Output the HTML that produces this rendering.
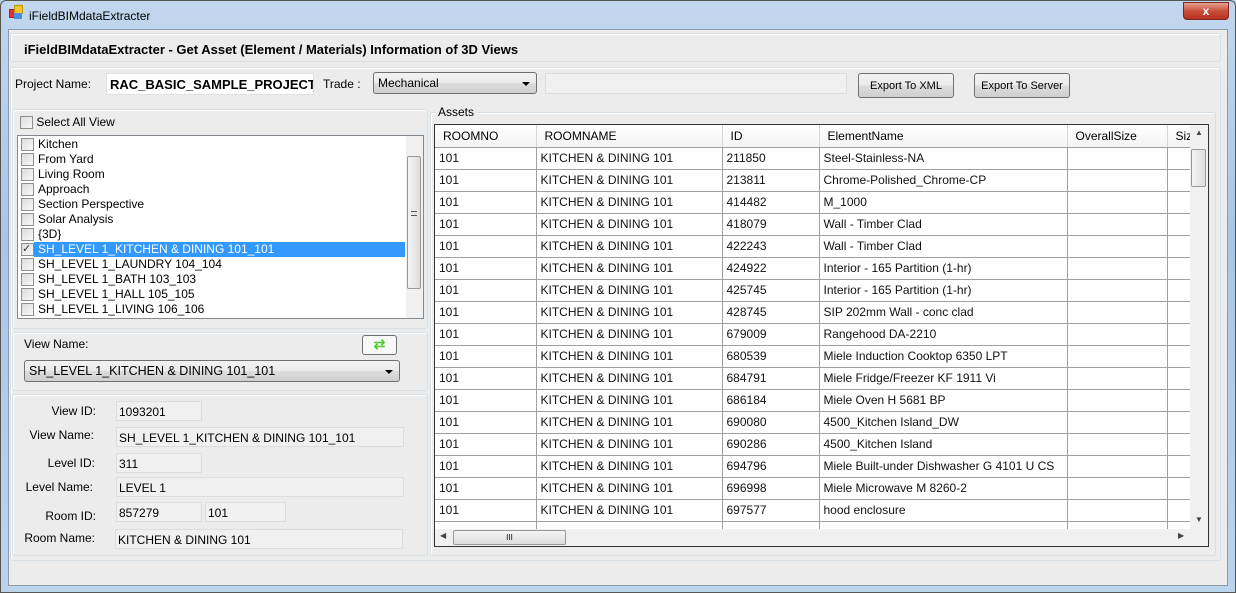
<!DOCTYPE html>
<html><head><meta charset="utf-8"><style>
*{box-sizing:border-box;margin:0;padding:0}
body{width:1236px;height:593px;position:relative;overflow:hidden;background:#b9d1ea;font-family:"Liberation Sans",sans-serif;font-size:12px;color:#000}
.a{position:absolute}
.frame{left:0;top:0;width:1236px;height:593px;background:linear-gradient(#c2d7ee,#a9c6e6 40%,#bcd3ec);border:1px solid #555;border-radius:6px 6px 0 0}
.client{left:8px;top:29px;width:1220px;height:557px;background:#ececec;border:1px solid #8a9bb0}
.grp{border:1px solid #d5dfe5;border-radius:3px;box-shadow:inset 1px 1px 0 #fff}
.tb{background:#f0f0f0;border:1px solid #dcdcdc;padding:3px 2px;font-size:12px;white-space:nowrap;overflow:hidden}
.btn{border:1px solid #707070;border-radius:3px;background:linear-gradient(#f2f2f2,#ebebeb 50%,#dddddd 51%,#cfcfcf);text-align:center;font-size:11px;line-height:24px}
.combo{border:1px solid #707070;border-radius:3px;background:linear-gradient(#f2f2f2,#ebebeb 50%,#dddddd 51%,#cfcfcf);padding:3px 4px;font-size:12px}
.arr{position:absolute;right:6px;top:9px;border-left:4px solid transparent;border-right:4px solid transparent;border-top:4px solid #000}
.cb{display:inline-block;width:13px;height:13px;border:1px solid #8e8f8f;background:linear-gradient(135deg,#dcdcdc,#f8f8f8);vertical-align:middle}
.li{height:15px;line-height:15px;position:relative;padding-left:20px;white-space:nowrap}
.li .cb{position:absolute;left:3px;top:1px}
.lbl{text-align:right;width:80px}
table{border-collapse:collapse;font-size:12px}
td{border-right:1px solid #a0a0a0;border-bottom:1px solid #a0a0a0;height:22px;padding-left:4px;white-space:nowrap;overflow:hidden;color:#111}
th{font-weight:normal;text-align:left;height:22px;padding-left:8px;border-right:1px solid #d5d5d5;border-bottom:1px solid #a0a0a0;background:linear-gradient(#fff,#f3f3f3)}
</style></head><body>
<div class="a frame"></div>
<div class="a" style="left:9px;top:9px;width:9px;height:9px;background:#d33;border:1px solid #a22"></div>
<div class="a" style="left:14px;top:5px;width:9px;height:9px;background:#f4c430;border:1px solid #b90"></div>
<div class="a" style="left:14px;top:13px;width:8px;height:6px;background:#4a8ee0"></div>
<div class="a" style="left:29px;top:9px;font-size:12px">iFieldBIMdataExtracter</div>
<div class="a" style="left:1183px;top:2px;width:46px;height:18px;border:1px solid #7a2a20;border-radius:0 0 4px 4px;background:linear-gradient(#e8a090,#c8503a 50%,#b83020);color:#fff;text-align:center;font-weight:bold;font-size:12px;line-height:16px">x</div>
<div class="a client"></div>
<div class="a grp" style="left:10px;top:33px;width:1211px;height:29px"></div>
<div class="a" style="left:24px;top:42px;font-weight:bold;font-size:13px">iFieldBIMdataExtracter - Get Asset (Element / Materials) Information of 3D Views</div>
<div class="a grp" style="left:10px;top:67px;width:1211px;height:494px"></div>
<div class="a" style="left:15px;top:77px">Project Name:</div>
<div class="a" style="left:106px;top:73px;width:208px;height:22px;background:#fff;border:1px solid #e0e0e0;font-weight:bold;font-size:13px;padding:3px 3px;overflow:hidden;white-space:nowrap">RAC_BASIC_SAMPLE_PROJECT</div>
<div class="a" style="left:323px;top:77px">Trade :</div>
<div class="a combo" style="left:373px;top:72px;width:164px;height:22px">Mechanical<span class="arr"></span></div>
<div class="a tb" style="left:545px;top:73px;width:302px;height:21px"></div>
<div class="a btn" style="left:858px;top:73px;width:96px;height:25px">Export To XML</div>
<div class="a btn" style="left:974px;top:73px;width:96px;height:25px">Export To Server</div>

<div class="a grp" style="left:12px;top:109px;width:416px;height:220px"></div>
<div class="a" style="left:20px;top:115px"><span class="cb"></span> Select All View</div>
<div class="a" style="left:17px;top:135px;width:407px;height:184px;background:#fff;border:1px solid #828790;padding-top:1px">
<div class="li"><span class="cb"></span>Kitchen</div>
<div class="li"><span class="cb"></span>From Yard</div>
<div class="li"><span class="cb"></span>Living Room</div>
<div class="li"><span class="cb"></span>Approach</div>
<div class="li"><span class="cb"></span>Section Perspective</div>
<div class="li"><span class="cb"></span>Solar Analysis</div>
<div class="li"><span class="cb"></span>{3D}</div>
<div class="li"><span class="cb" style="font-size:11px;line-height:11px;color:#334">✓</span><span style="position:absolute;left:16px;top:0;width:371px;height:15px;background:#3399ff;color:#fff;padding-left:4px">SH_LEVEL 1_KITCHEN &amp; DINING 101_101</span></div>
<div class="li"><span class="cb"></span>SH_LEVEL 1_LAUNDRY 104_104</div>
<div class="li"><span class="cb"></span>SH_LEVEL 1_BATH 103_103</div>
<div class="li"><span class="cb"></span>SH_LEVEL 1_HALL 105_105</div>
<div class="li"><span class="cb"></span>SH_LEVEL 1_LIVING 106_106</div>
<div class="a" style="right:0;top:0;width:17px;height:182px;background:#f0f0f0"><div style="position:absolute;left:1px;top:20px;width:14px;height:133px;border:1px solid #999;border-radius:2px;background:linear-gradient(90deg,#f4f4f4,#ddd)"></div><div style="position:absolute;left:5px;top:75px;width:6px;height:5px;border-top:1px solid #555;border-bottom:1px solid #555"></div></div>
</div>

<div class="a grp" style="left:12px;top:332px;width:416px;height:59px"></div>
<div class="a" style="left:24px;top:337px">View Name:</div>
<div class="a btn" style="left:362px;top:335px;width:35px;height:20px;background:#f8f8f8;line-height:16px;color:#5c3;font-weight:bold;font-size:14px">⇄</div>
<div class="a combo" style="left:24px;top:360px;width:376px;height:22px;font-size:12.5px">SH_LEVEL 1_KITCHEN &amp; DINING 101_101<span class="arr"></span></div>

<div class="a grp" style="left:12px;top:394px;width:416px;height:162px"></div>
<div class="a lbl" style="left:16px;top:404px">View ID:</div>
<div class="a tb" style="left:116px;top:401px;width:86px;height:20px">1093201</div>
<div class="a lbl" style="left:14px;top:428px">View Name:</div>
<div class="a tb" style="left:116px;top:427px;width:288px;height:20px">SH_LEVEL 1_KITCHEN &amp; DINING 101_101</div>
<div class="a lbl" style="left:15px;top:456px">Level ID:</div>
<div class="a tb" style="left:116px;top:453px;width:86px;height:20px">311</div>
<div class="a lbl" style="left:13px;top:480px">Level Name:</div>
<div class="a tb" style="left:116px;top:477px;width:288px;height:20px">LEVEL 1</div>
<div class="a lbl" style="left:16px;top:509px">Room ID:</div>
<div class="a tb" style="left:116px;top:502px;width:86px;height:20px">857279</div>
<div class="a tb" style="left:205px;top:502px;width:81px;height:20px">101</div>
<div class="a lbl" style="left:15px;top:531px">Room Name:</div>
<div class="a tb" style="left:115px;top:529px;width:288px;height:20px">KITCHEN &amp; DINING 101</div>

<div class="a grp" style="left:430px;top:112px;width:786px;height:444px"></div>
<div class="a" style="left:436px;top:105px;background:#ececec;padding:0 2px">Assets</div>
<div class="a" style="left:434px;top:124px;width:775px;height:423px;background:#fff;border:1px solid #333;overflow:hidden">
<table style="width:755px;table-layout:fixed">
<colgroup><col style="width:101px"><col style="width:186px"><col style="width:97px"><col style="width:248px"><col style="width:100px"><col style="width:23px"></colgroup>
<tr><th>ROOMNO</th><th>ROOMNAME</th><th>ID</th><th>ElementName</th><th>OverallSize</th><th>Siz</th></tr>
<tr><td>101</td><td>KITCHEN &amp; DINING 101</td><td>211850</td><td>Steel-Stainless-NA</td><td></td><td></td></tr>
<tr><td>101</td><td>KITCHEN &amp; DINING 101</td><td>213811</td><td>Chrome-Polished_Chrome-CP</td><td></td><td></td></tr>
<tr><td>101</td><td>KITCHEN &amp; DINING 101</td><td>414482</td><td>M_1000</td><td></td><td></td></tr>
<tr><td>101</td><td>KITCHEN &amp; DINING 101</td><td>418079</td><td>Wall - Timber Clad</td><td></td><td></td></tr>
<tr><td>101</td><td>KITCHEN &amp; DINING 101</td><td>422243</td><td>Wall - Timber Clad</td><td></td><td></td></tr>
<tr><td>101</td><td>KITCHEN &amp; DINING 101</td><td>424922</td><td>Interior - 165 Partition (1-hr)</td><td></td><td></td></tr>
<tr><td>101</td><td>KITCHEN &amp; DINING 101</td><td>425745</td><td>Interior - 165 Partition (1-hr)</td><td></td><td></td></tr>
<tr><td>101</td><td>KITCHEN &amp; DINING 101</td><td>428745</td><td>SIP 202mm Wall - conc clad</td><td></td><td></td></tr>
<tr><td>101</td><td>KITCHEN &amp; DINING 101</td><td>679009</td><td>Rangehood DA-2210</td><td></td><td></td></tr>
<tr><td>101</td><td>KITCHEN &amp; DINING 101</td><td>680539</td><td>Miele Induction Cooktop 6350 LPT</td><td></td><td></td></tr>
<tr><td>101</td><td>KITCHEN &amp; DINING 101</td><td>684791</td><td>Miele Fridge/Freezer KF 1911 Vi</td><td></td><td></td></tr>
<tr><td>101</td><td>KITCHEN &amp; DINING 101</td><td>686184</td><td>Miele Oven H 5681 BP</td><td></td><td></td></tr>
<tr><td>101</td><td>KITCHEN &amp; DINING 101</td><td>690080</td><td>4500_Kitchen Island_DW</td><td></td><td></td></tr>
<tr><td>101</td><td>KITCHEN &amp; DINING 101</td><td>690286</td><td>4500_Kitchen Island</td><td></td><td></td></tr>
<tr><td>101</td><td>KITCHEN &amp; DINING 101</td><td>694796</td><td>Miele Built-under Dishwasher G 4101 U CS</td><td></td><td></td></tr>
<tr><td>101</td><td>KITCHEN &amp; DINING 101</td><td>696998</td><td>Miele Microwave M 8260-2</td><td></td><td></td></tr>
<tr><td>101</td><td>KITCHEN &amp; DINING 101</td><td>697577</td><td>hood enclosure</td><td></td><td></td></tr>
<tr><td></td><td></td><td></td><td></td><td></td><td></td></tr>
</table>
<div class="a" style="left:755px;top:0;width:18px;height:404px;background:#f0f0f0"><div style="position:absolute;left:1px;top:24px;width:15px;height:38px;border:1px solid #999;border-radius:2px;background:linear-gradient(90deg,#f4f4f4,#ddd)"></div><div style="position:absolute;left:5px;top:3px;font-size:8px;color:#444">▲</div><div style="position:absolute;left:5px;top:390px;font-size:8px;color:#444">▼</div></div>
<div class="a" style="left:0;top:404px;width:773px;height:17px;background:#f0f0f0"><div style="position:absolute;left:18px;top:1px;width:113px;height:15px;border:1px solid #999;border-radius:2px;background:linear-gradient(#f4f4f4,#ddd);text-align:center;font-size:8px;line-height:13px">III</div><div style="position:absolute;left:5px;top:2px;font-size:8px;color:#444">◀</div><div style="position:absolute;left:743px;top:2px;font-size:8px;color:#444">▶</div></div>
</div>
</body></html>
